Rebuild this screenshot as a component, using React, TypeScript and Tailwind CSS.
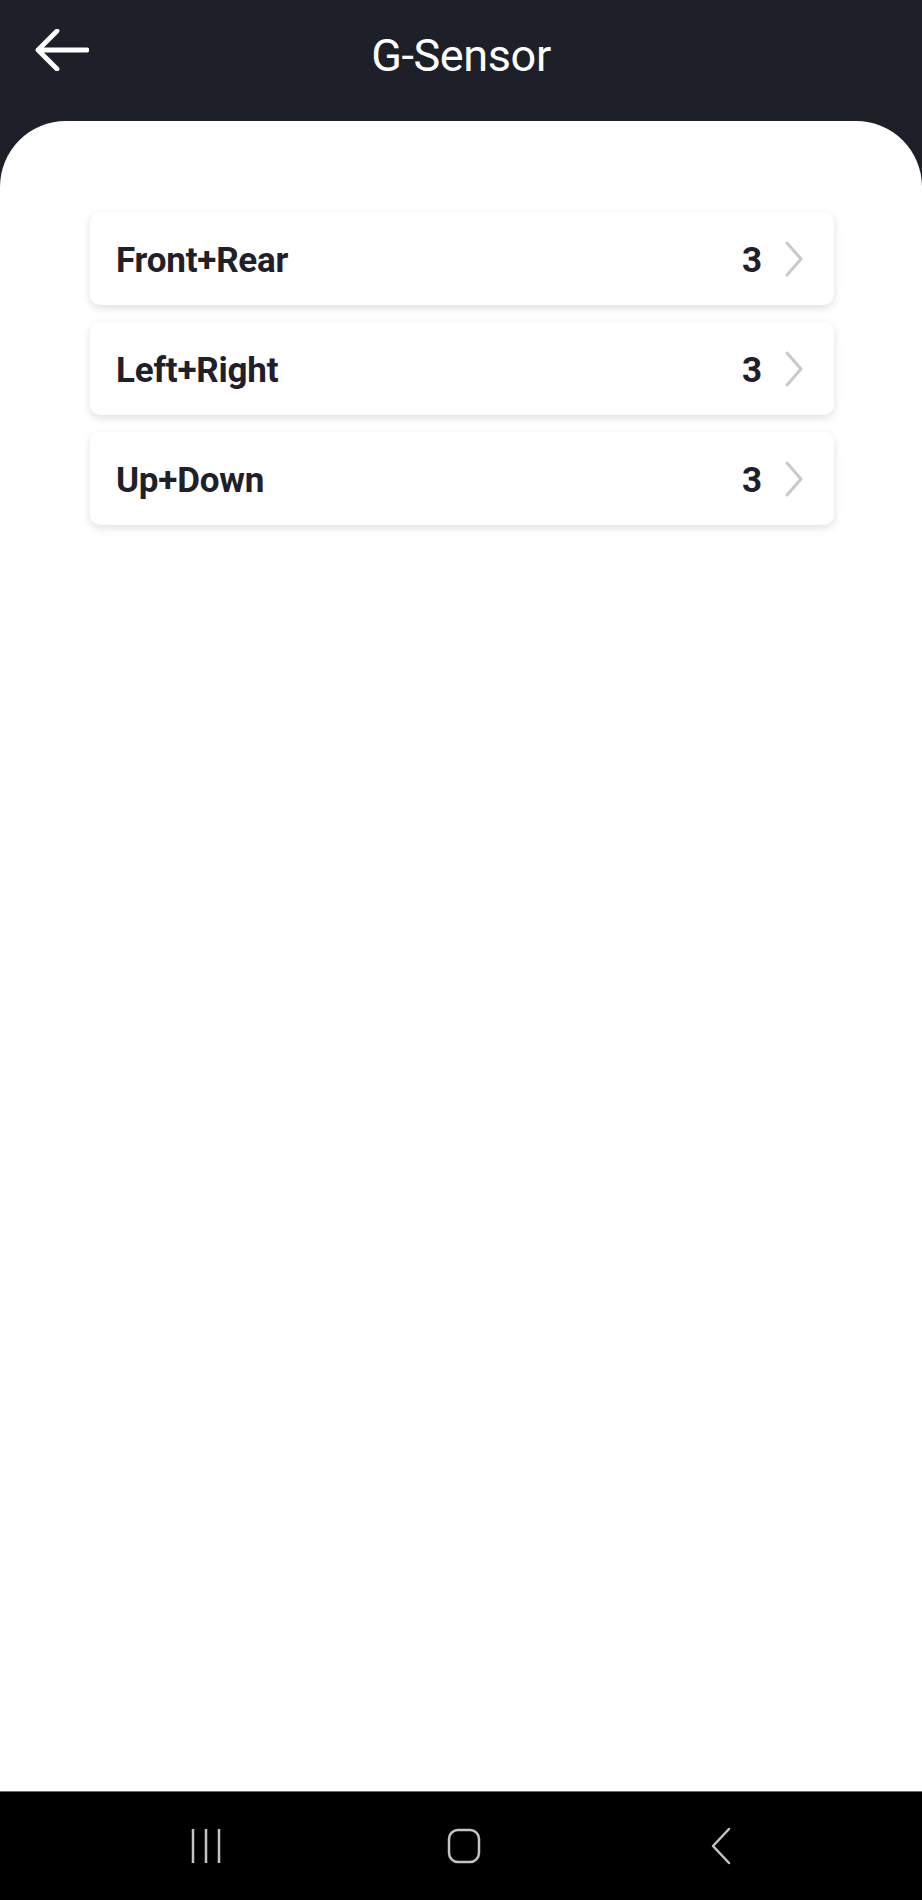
import React from "react";

const rows = [
  { label: "Front+Rear", value: 3 },
  { label: "Left+Right", value: 3 },
  { label: "Up+Down", value: 3 },
];

function BackArrow() {
  return (
    <svg width="54" height="42" viewBox="0 0 54 42" fill="none">
      <path
        d="M52 21H4M22 2L3 21l19 19"
        stroke="#fff"
        strokeWidth="4.8"
        strokeLinecap="round"
        strokeLinejoin="round"
      />
    </svg>
  );
}

function Chevron() {
  return (
    <svg width="20" height="36" viewBox="0 0 20 36" fill="none">
      <path
        d="M3 2l14 16L3 34"
        stroke="#c9c9c9"
        strokeWidth="3"
        strokeLinecap="round"
        strokeLinejoin="round"
      />
    </svg>
  );
}

export default function App() {
  return (
    <div
      className="min-h-[1900px] flex flex-col bg-[#1e2029]"
      style={{ fontFamily: "Roboto, 'Noto Sans', sans-serif" }}
    >
      {/* Header */}
      <div className="h-[121px] grid grid-cols-[1fr_auto_1fr] items-start">
        <div className="pl-[35px] pt-[29px]">
          <BackArrow />
        </div>
        <h1 className="pt-[28px] text-[45px] leading-[56px] text-white font-normal tracking-[-0.4px]">
          G-Sensor
        </h1>
        <div />
      </div>

      {/* Content */}
      <div className="flex-1 bg-white rounded-t-[66px] pt-[91px] pl-[90px] pr-[88px]">
        <div className="flex flex-col gap-[17px]">
          {rows.map((r) => (
            <div
              key={r.label}
              className="h-[93px] rounded-[10px] bg-white shadow-[0_3px_8px_rgba(0,0,0,0.13)] flex items-center pl-[26px] pr-[30px]"
            >
              <span className="flex-1 pt-[5px] text-[35px] font-bold text-[#1f2029] tracking-[-0.2px]">
                {r.label}
              </span>
              <span className="pt-[5px] text-[35px] font-bold text-[#1f2029] mr-[22px]">
                {r.value}
              </span>
              <Chevron />
            </div>
          ))}
        </div>
      </div>

      {/* Android nav bar */}
      <div className="h-[109px] bg-black border-t border-[#6b6b6b] flex items-center justify-center pl-[6px]">
        <div className="w-[257px] flex justify-center">
          <svg width="36" height="36" viewBox="0 0 36 36" fill="none">
            <path d="M4 1v34M17 1v34M30 1v34" stroke="#c4c4c4" strokeWidth="2.5" />
          </svg>
        </div>
        <div className="w-[257px] flex justify-center">
          <svg width="36" height="36" viewBox="0 0 36 36" fill="none">
            <rect x="3" y="2" width="30" height="32" rx="9" stroke="#c4c4c4" strokeWidth="2.5" />
          </svg>
        </div>
        <div className="w-[257px] flex justify-center">
          <svg width="24" height="38" viewBox="0 0 24 38" fill="none">
            <path d="M20 2L4 19l16 17" stroke="#c4c4c4" strokeWidth="2.5" strokeLinecap="round" strokeLinejoin="round" />
          </svg>
        </div>
      </div>
    </div>
  );
}
